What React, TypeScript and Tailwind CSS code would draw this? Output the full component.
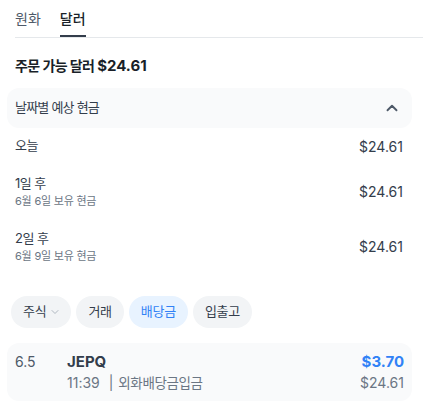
import { ChevronDown, ChevronUp } from "lucide-react";

const font = { fontFamily: "Inter, 'Noto Sans CJK KR', sans-serif" };

const forecast = [
  { title: "1일 후", sub: "6월 6일 보유 현금", amount: "$24.61" },
  { title: "2일 후", sub: "6월 9일 보유 현금", amount: "$24.61" },
];

const chips = [
  { label: "거래", active: false },
  { label: "배당금", active: true },
  { label: "입출고", active: false },
];

export default function App() {
  return (
    <div className="w-[423px] h-[407px] bg-white text-[#333d4b] overflow-hidden" style={font}>
      {/* 탭 */}
      <div className="ml-[15px] flex gap-[19px] border-b border-[#e5e8eb] h-[38px]">
        <div className="pt-[8px] text-[14px] text-[#4e5968]">원화</div>
        <div className="pt-[8px] text-[14px] font-medium text-[#191f28] border-b-2 border-[#333d4b]">달러</div>
      </div>

      <div className="px-[15px] pt-[17px] text-[14px] font-bold text-[#191f28] leading-[22px] tracking-[-0.04em]">
        주문 가능 달러 <span className="text-[15px] tracking-normal">$24.61</span>
      </div>

      {/* 날짜별 예상 현금 */}
      <div className="ml-[7px] mr-[11px] mt-[11px] h-[40px] rounded-[12px] bg-[#f9fafb] flex items-center justify-between pl-[8px] pr-[11px]">
        <span className="text-[13px] tracking-[-0.06em] text-[#333d4b]">날짜별 예상 현금</span>
        <ChevronUp className="w-[18px] h-[18px] text-[#4e5968]" strokeWidth={2.5} />
      </div>

      <div className="pl-[15px] pr-[20px]">
        <div className="flex justify-between items-center h-[36px]">
          <span className="text-[13px] tracking-[-0.04em]">오늘</span>
          <span className="text-[14px]">$24.61</span>
        </div>
        {forecast.map((f) => (
          <div key={f.title} className="flex justify-between items-center h-[55px]">
            <div className="flex flex-col">
              <span className="text-[13px] leading-[20px] tracking-[-0.04em]">{f.title}</span>
              <span className="text-[11px] text-[#6b7684] leading-[17px] tracking-[-0.02em]">{f.sub}</span>
            </div>
            <span className="text-[14px]">{f.amount}</span>
          </div>
        ))}
      </div>

      {/* 필터 칩 */}
      <div className="flex gap-[5px] px-[11px] mt-[22px]">
        <div className="h-[32px] pl-[12px] pr-[10px] rounded-full bg-[#f2f4f6] flex items-center gap-[3px] text-[13px] tracking-[-0.02em] text-[#333d4b]">
          주식
          <ChevronDown className="w-[12px] h-[12px] text-[#b0b8c1]" strokeWidth={2} />
        </div>
        {chips.map((c) => (
          <div
            key={c.label}
            className={
              c.active
                ? "h-[32px] px-[12px] rounded-full bg-[#e8f3ff] flex items-center text-[13px] tracking-[-0.02em] text-[#3182f6]"
                : "h-[32px] px-[12px] rounded-full bg-[#f2f4f6] flex items-center text-[13px] tracking-[-0.02em] text-[#333d4b]"
            }
          >
            {c.label}
          </div>
        ))}
      </div>

      {/* 거래 내역 */}
      <div className="ml-[7px] mr-[11px] mt-[15px] h-[58px] rounded-[12px] bg-[#f9fafb] flex items-start pl-[8px] pr-[8px] pt-[8px]">
        <span className="w-[52px] text-[14px] text-[#4e5968] leading-[22px]">6.5</span>
        <div className="flex-1 flex flex-col">
          <span className="text-[15px] font-bold text-[#333d4b] leading-[22px]">JEPQ</span>
          <span className="text-[14px] text-[#6b7684] leading-[20px]">
            11:39 <span className="mx-[5px]">|</span>
            <span className="text-[13.5px] tracking-[-0.03em]">외화배당금입금</span>
          </span>
        </div>
        <div className="flex flex-col items-end">
          <span className="text-[15px] font-bold text-[#3182f6] leading-[22px]">$3.70</span>
          <span className="text-[14px] text-[#6b7684] leading-[20px]">$24.61</span>
        </div>
      </div>
    </div>
  );
}
